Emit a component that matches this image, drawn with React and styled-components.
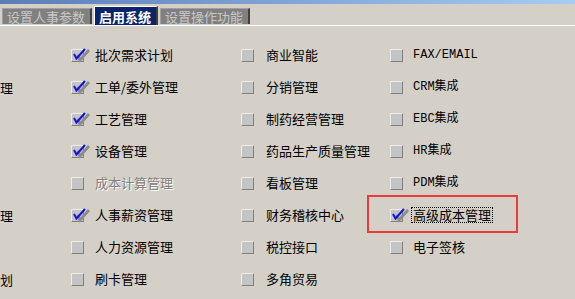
import React from "react"
import styled, {createGlobalStyle} from "styled-components"

const GlobalStyle = createGlobalStyle`
    html, body {
        margin: 0;
        padding: 0;
        background: #d4d0c8;
        overflow: hidden;
    }
    body {
        font-family: "Noto Sans CJK SC", "Liberation Sans", sans-serif;
    }
`

const Window = styled.div`
    width: 575px;
    height: 299px;
    background-color: #d4d0c8;
    position: relative;
    overflow: hidden;
`

const TitleStrip = styled.div`
    height: 4px;
    background: linear-gradient(90deg, #5b7db6 0%, #86a8d8 55%, #a8cbf1 100%);
`

const TabBar = styled.div`
    height: 21px;
    display: flex;
    flex-direction: row;
    align-items: flex-end;
    gap: 2px;
    padding-left: 2px;
    border-bottom: 1px solid #ffffff;
`

const Tab = styled.div`
    height: ${props => props.$active ? "18px" : "15px"};
    margin-bottom: ${props => props.$active ? "0" : "1px"};
    display: flex;
    align-items: center;
    padding: 0 5px 0 4px;
    background-color: ${props => props.$active ? "#0a246a" : "#808080"};
    color: ${props => props.$active ? "#ffffff" : "#c8c8c8"};
    font-size: 13px;
    font-weight: ${props => props.$active ? "bold" : "normal"};
    border-top: 1px solid ${props => props.$active ? "#ffffff" : "#a0a0a0"};
    border-left: 1px solid ${props => props.$active ? "#ffffff" : "#a0a0a0"};
    border-right: 2px solid #404040;
    white-space: nowrap;
    line-height: 1;
`

const Grid = styled.div`
    display: grid;
    grid-template-columns: 71px 170px 149px 1fr;
    grid-auto-rows: 32px;
    padding-top: 13px;
`

const Cell = styled.div`
    display: flex;
    flex-direction: row;
    align-items: center;
    gap: ${props => props.$gap || 11}px;
    position: relative;
`

const Clipped = styled.div`
    display: flex;
    align-items: center;
    font-size: 13px;
    color: #000;
`

const BoxWrap = styled.span`
    position: relative;
    width: 13px;
    height: 13px;
    flex: none;
`

const Box = styled.span`
    display: block;
    box-sizing: border-box;
    width: 13px;
    height: 13px;
    background-color: #c4c4c4;
    border-top: 1px solid #ececec;
    border-left: 1px solid #ececec;
    border-right: 1px solid #808080;
    border-bottom: 1px solid #808080;
`

const CheckMark = styled.svg`
    position: absolute;
    left: 1px;
    top: -2px;
    width: 20px;
    height: 16px;
    overflow: visible;
`

const Label = styled.span`
    font-size: ${props => props.$mono ? "12px" : "13px"};
    font-family: ${props => props.$mono
        ? `"Liberation Mono", "Noto Sans CJK SC", monospace`
        : `"Noto Sans CJK SC", "Liberation Sans", sans-serif`};
    color: ${props => props.$disabled ? "#808080" : "#000000"};
    text-shadow: ${props => props.$disabled ? "1px 1px 0 #ffffff" : "none"};
    outline: ${props => props.$focus ? "1px dotted #000000" : "none"};
    padding: ${props => props.$focus ? "0 1px" : "0"};
    margin-left: ${props => props.$focus ? "-1px" : "0"};
    line-height: 14px;
    white-space: nowrap;
`

const Highlight = styled.div`
    position: absolute;
    left: -23px;
    top: -4px;
    width: 151px;
    height: 38px;
    box-sizing: border-box;
    border: 2px solid #ea3a3a;
    pointer-events: none;
`

function Checkbox({checked}){
    return <BoxWrap>
        <Box />
        {checked && <CheckMark viewBox="0 0 20 16">
            <polyline points="5.5,8 8,13 17,3" fill="none" stroke="#8c8c8c" strokeWidth="2.8" />
            <polyline points="2,7 4.5,11.5 13,2" fill="none" stroke="#1414d8" strokeWidth="2" />
        </CheckMark>}
    </BoxWrap>
}

const rows = [
    ["", ["批次需求计划", true], ["商业智能"], ["FAX/EMAIL", false, true]],
    ["理", ["工单/委外管理", true], ["分销管理"], ["CRM集成", false, true]],
    ["", ["工艺管理", true], ["制药经营管理"], ["EBC集成", false, true]],
    ["", ["设备管理", true], ["药品生产质量管理"], ["HR集成", false, true]],
    ["", ["成本计算管理", false, false, true], ["看板管理"], ["PDM集成", false, true]],
    ["理", ["人事薪资管理", true], ["财务稽核中心"], ["高级成本管理", true, false, false, true]],
    ["", ["人力资源管理"], ["税控接口"], ["电子签核"]],
    ["划", ["刷卡管理"], ["多角贸易"], null],
]

function Option({item, gap}){
    if(!item) return <Cell />
    const [text, checked, mono, disabled, focus] = item
    return <Cell $gap={gap}>
        {focus && <Highlight />}
        <Checkbox checked={checked} />
        <Label $mono={mono} $disabled={disabled} $focus={focus}>{text}</Label>
    </Cell>
}

export default function App(){
    return <Window>
        <GlobalStyle />
        <TitleStrip />
        <TabBar>
            <Tab>设置人事参数</Tab>
            <Tab $active>启用系统</Tab>
            <Tab>设置操作功能</Tab>
        </TabBar>
        <Grid>
            {rows.map((r, i) => <React.Fragment key={i}>
                <Clipped>{r[0]}</Clipped>
                <Option item={r[1]} gap={11} />
                <Option item={r[2]} gap={12} />
                <Option item={r[3]} gap={10} />
            </React.Fragment>)}
        </Grid>
    </Window>
}
